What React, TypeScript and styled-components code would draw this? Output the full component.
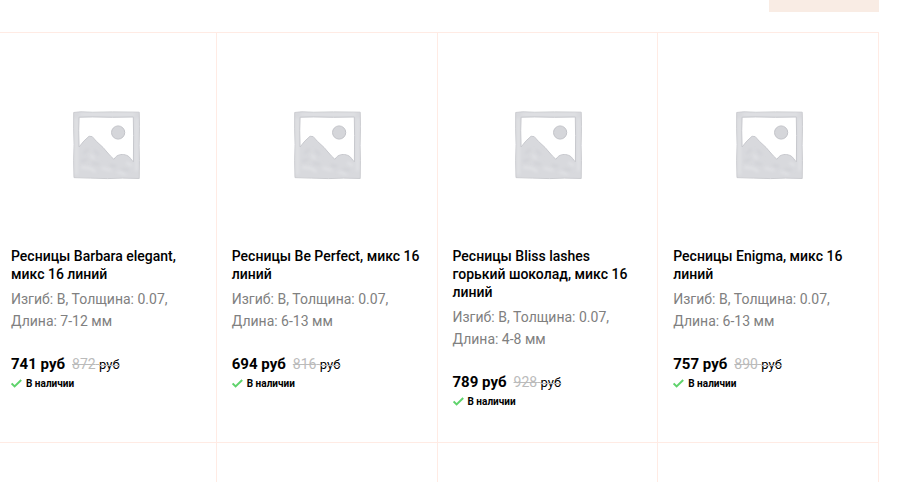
import React from "react";
import styled, { createGlobalStyle } from "styled-components";

const GlobalStyle = createGlobalStyle`
  * { box-sizing: border-box; }
  body {
    margin: 0;
    background: #fff;
    color: #000;
    font-family: Roboto, "Liberation Sans", sans-serif;
  }
`;

const Page = styled.main`
  padding-right: 29px;
  overflow: hidden;
`;

const TopBar = styled.div`
  display: flex;
  justify-content: flex-end;
  margin-bottom: 20px;
`;

const Accent = styled.div`
  width: 110px;
  height: 12px;
  background: #f9ece4;
`;

const Grid = styled.ul`
  display: grid;
  grid-template-columns: repeat(4, 1fr);
  margin: 0 0 0 -4px;
  padding: 0;
  list-style: none;
  border-top: 1px solid #ffebe4;
`;

const Card = styled.li`
  display: flex;
  flex-direction: column;
  min-height: 39px;
  padding: 0 15px;
  border-right: 1px solid #ffebe4;
`;

const ProductCard = styled(Card)`
  padding-bottom: 34px;
  border-bottom: 1px solid #ffebe4;
`;

const Thumb = styled.div`
  display: flex;
  align-items: center;
  justify-content: center;
  height: 214px;
  padding: 10px 0 0 2px;
`;

const Title = styled.h2`
  margin: 0 0 5px;
  font-size: 14px;
  line-height: 18px;
  font-weight: 500;
`;

const Description = styled.p`
  margin: 0 0 20px;
  font-size: 14px;
  line-height: 22px;
  color: #808080;
`;

const Prices = styled.div`
  display: flex;
  align-items: baseline;
  gap: 7px;
  line-height: 24px;
`;

const Price = styled.span`
  font-size: 15px;
  font-weight: 700;
`;

const OldPrice = styled.del`
  font-size: 14px;
  color: #bbb;
`;

const Currency = styled.span`
  font-size: 13px;
  color: #000;
`;

const Stock = styled.div`
  display: flex;
  align-items: center;
  gap: 4px;
  font-size: 10px;
  line-height: 13px;
  font-weight: 700;
`;

function Placeholder() {
  return (
    <svg width="67" height="69" viewBox="0 0 68 70" role="img" aria-label="Нет изображения">
      <defs>
        <filter id="soft" x="-20%" y="-20%" width="140%" height="140%">
          <feGaussianBlur stdDeviation="1.4" />
        </filter>
      </defs>
      <path
        d="M.7 1.5 8 .8 20 1.3 40 .9 67.2 1.2 67.6 16 67.1 35 67.5 50 67.2 68.5 50 68.1 35 68.6 18 68.1 1 67.6.6 50 1.1 34 .6 18Z"
        fill="#d8d9dd"
        stroke="#cbccd0"
        strokeWidth="1"
      />
      <g fill="none" stroke="#e4e5e8" strokeWidth="2" strokeLinecap="round" filter="url(#soft)">
        <path d="M3.5 8V64M8 3.5H62M64.5 8V60" />
        <path d="M9 57 17 58 22 61M30 58 38 60M46 62 53 64M55 53 59 55M18 45 21 48" />
      </g>
      <g fill="none" stroke="#cfd0d5" strokeWidth="2" strokeLinecap="round" filter="url(#soft)">
        <path d="M15 39 11 43M22 40 26 44M9 51 14 49M20 53 26 54M38 55 43 56M50 59 56 60" />
      </g>
      <path
        d="M6.2 6.3 20 6 40 6.4 61.2 6.1 61.5 25 61.3 51.6 C58.8 49.5 58 46.2 54.5 45 C50.5 43.4 46.2 44 43.5 46.5 L41.5 49 38 45.7 30.5 37 24 31 19.5 26 16.3 25.6 11 30.5 6.2 36.5 5.8 20Z"
        fill="#fff"
        stroke="#c7c8cd"
        strokeWidth="1"
      />
      <circle cx="45.8" cy="21.8" r="6.7" fill="#d5d6da" stroke="#c2c3c8" strokeWidth="1" />
    </svg>
  );
}

function Check() {
  return (
    <svg width="11" height="9" viewBox="0 0 11 9" aria-hidden="true">
      <path d="M.6 4.4 3.6 7.4 10.2 1" fill="none" stroke="#5fd36c" strokeWidth="2" />
    </svg>
  );
}

const products = [
  { title: "Ресницы Barbara elegant, микс 16 линий", length: "7-12", price: 741, old: 872 },
  { title: "Ресницы Be Perfect, микс 16 линий", length: "6-13", price: 694, old: 816 },
  { title: "Ресницы Bliss lashes горький шоколад, микс 16 линий", length: "4-8", price: 789, old: 928 },
  { title: "Ресницы Enigma, микс 16 линий", length: "6-13", price: 757, old: 890 },
];

export default function App() {
  return (
    <>
      <GlobalStyle />
      <Page>
        <TopBar>
          <Accent />
        </TopBar>
        <Grid>
          {products.map((p) => (
            <ProductCard key={p.title}>
              <Thumb>
                <Placeholder />
              </Thumb>
              <Title>{p.title}</Title>
              <Description>{`Изгиб: B, Толщина: 0.07, Длина: ${p.length} мм`}</Description>
              <Prices>
                <Price>{`${p.price} руб`}</Price>
                <OldPrice>
                  {p.old} <Currency>руб</Currency>
                </OldPrice>
              </Prices>
              <Stock>
                <Check />
                <span>В наличии</span>
              </Stock>
            </ProductCard>
          ))}
          {products.map((p) => (
            <Card key={`next-${p.title}`} aria-hidden="true" />
          ))}
        </Grid>
      </Page>
    </>
  );
}
